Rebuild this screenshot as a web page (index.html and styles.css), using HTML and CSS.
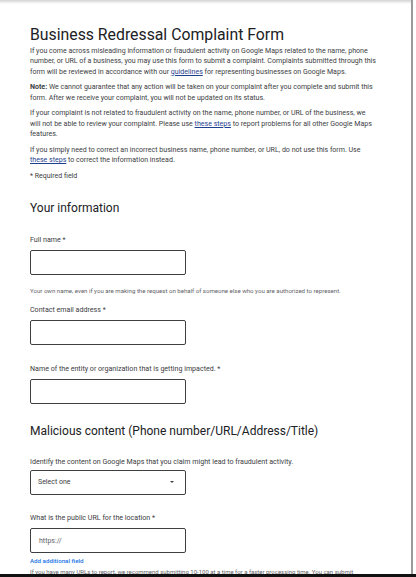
FILE: index.html
```html
<!DOCTYPE html>
<html lang="en">
<head>
<meta charset="utf-8">
<title>Business Redressal Complaint Form</title>
<link rel="stylesheet" href="styles.css">
</head>
<body>
<div class="frame">
  <div class="top-shade"></div>
  <main class="content">
    <h1 class="title">Business Redressal Complaint Form</h1>
    <p class="para">If you come across misleading information or fraudulent activity on Google Maps related to the name, phone<br>number, or URL of a business, you may use this form to submit a complaint. Complaints submitted through this<br>form will be reviewed in accordance with our <a class="link" href="#">guidelines</a> for representing businesses on Google Maps.</p>
    <p class="para"><b>Note:</b> We cannot guarantee that any action will be taken on your complaint after you complete and submit this<br>form. After we receive your complaint, you will not be updated on its status.</p>
    <p class="para">If your complaint is not related to fraudulent activity on the name, phone number, or URL of the business, we<br>will not be able to review your complaint. Please use <a class="link" href="#">these steps</a> to report problems for all other Google Maps<br>features.</p>
    <p class="para">If you simply need to correct an incorrect business name, phone number, or URL, do not use this form. Use<br><a class="link" href="#">these steps</a> to correct the information instead.</p>
    <p class="required">* Required field</p>

    <h2 class="section">Your information</h2>

    <div class="field">
      <label class="label">Full name *</label>
      <div class="input"></div>
      <p class="helper">Your own name, even if you are making the request on behalf of someone else who you are authorized to represent.</p>
    </div>

    <div class="field field-after-helper">
      <label class="label">Contact email address *</label>
      <div class="input"></div>
    </div>

    <div class="field">
      <label class="label">Name of the entity or organization that is getting impacted. *</label>
      <div class="input"></div>
    </div>

    <h2 class="section">Malicious content (Phone number/URL/Address/Title)</h2>

    <div class="field">
      <label class="label">Identify the content on Google Maps that you claim might lead to fraudulent activity.</label>
      <div class="input select tight"><span class="select-text">Select one</span><span class="caret"></span></div>
    </div>

    <div class="field">
      <label class="label">What is the public URL for the location *</label>
      <div class="input"><span class="placeholder">https://</span></div>
      <a class="add-field" href="#">Add additional field</a>
      <p class="cut">If you have many URLs to report, we recommend submitting 10-100 at a time for a faster processing time. You can submit</p>
    </div>
  </main>
</div>
<div class="bottom-bar"></div>
</body>
</html>
```
FILE: styles.css
```css
html, body {
  margin: 0;
  padding: 0;
  background: #ffffff;
}
body {
  width: 416px;
  height: 577px;
  overflow: hidden;
  font-family: Roboto, "Liberation Sans", Arial, sans-serif;
  color: #3c4043;
}
.frame {
  width: 411px;
  height: 577px;
  border-right: 2px solid #9a9a9a;
  overflow: hidden;
}
.top-shade {
  height: 4px;
  background: linear-gradient(#d4d4d4, #ffffff);
}
.content {
  padding: 21px 0 0 30px;
  width: 360px;
}
.title {
  margin: 0 0 0.75px;
  font-family: Roboto, "Open Sans", sans-serif;
  font-weight: 400;
  font-size: 15.8px;
  line-height: 20px;
  color: #202124;
}
.para {
  margin: 0 0 5px;
  font-size: 7.05px;
  line-height: 10.5px;
}
.para b {
  font-weight: 700;
  color: #3c4043;
}
.link {
  color: #1f3f8f;
  text-decoration: underline;
}
.required {
  margin: 0;
  font-size: 7px;
  line-height: 10.5px;
}
.section {
  margin: 19px 0 0;
  font-weight: 400;
  font-size: 12px;
  line-height: 16px;
  color: #202124;
}
.field {
  margin-top: 18.5px;
}
.field-after-helper {
  margin-top: 10px;
}
.label {
  display: block;
  font-size: 7.1px;
  line-height: 10px;
  color: #3c4043;
}
.input {
  box-sizing: border-box;
  margin-top: 5px;
  width: 156px;
  height: 25px;
  border: 1px solid #3c4043;
  border-radius: 2px;
  display: flex;
  align-items: center;
  padding: 0 8px;
  font-size: 7px;
}
.tight {
  margin-top: 2.5px;
}
.select {
  justify-content: space-between;
  padding: 0 11px 0 7px;
}
.select-text {
  color: #3c4043;
}
.caret {
  width: 0;
  height: 0;
  border-left: 2.5px solid transparent;
  border-right: 2.5px solid transparent;
  border-top: 2.5px solid #3c4043;
}
.placeholder {
  color: #5f6368;
}
.helper {
  margin: 12.5px 0 0;
  font-size: 6.1px;
  line-height: 8px;
  color: #5f6368;
  white-space: nowrap;
}
.add-field {
  display: block;
  margin-top: 3.5px;
  font-size: 6.2px;
  line-height: 8px;
  font-weight: 500;
  color: #1a73e8;
  text-decoration: none;
}
.cut {
  margin: 3.5px 0 0;
  font-size: 6px;
  line-height: 8px;
  color: #5f6368;
  white-space: nowrap;
}
.bottom-bar {
  position: fixed;
  left: 0;
  right: 0;
  bottom: 0;
  height: 3px;
  background: #111111;
}
```
